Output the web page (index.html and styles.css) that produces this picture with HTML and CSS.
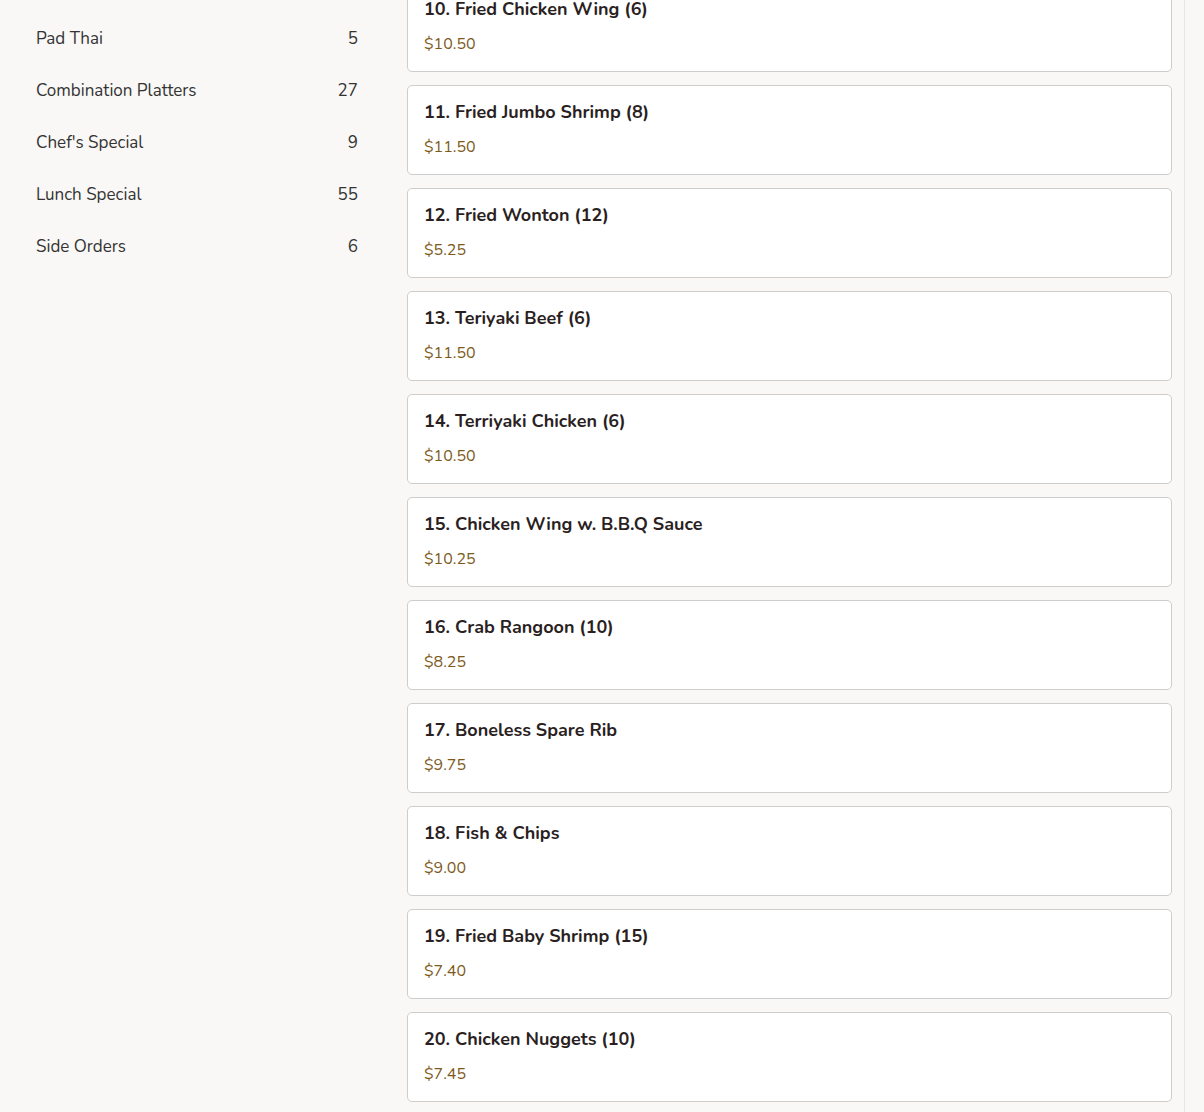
FILE: index.html
```html
<!DOCTYPE html>
<html lang="en">
<head>
    <meta charset="UTF-8">
    <meta name="viewport" content="width=device-width, initial-scale=1.0">
    <title>Menu</title>
    <link rel="stylesheet" href="styles.css">
</head>
<body>
    <div class="page">
        <!-- Categories -->
        <div class="sidebar">
            <div class="category"><span>Pad Thai</span><span class="count">5</span></div>
            <div class="category"><span>Combination Platters</span><span class="count">27</span></div>
            <div class="category"><span>Chef's Special</span><span class="count">9</span></div>
            <div class="category"><span>Lunch Special</span><span class="count">55</span></div>
            <div class="category"><span>Side Orders</span><span class="count">6</span></div>
        </div>

        <!-- Items -->
        <div class="menu">
            <div class="item-list">
                <div class="item"><div class="item-name">10. Fried Chicken Wing (6)</div><div class="item-price">$10.50</div></div>
                <div class="item"><div class="item-name">11. Fried Jumbo Shrimp (8)</div><div class="item-price">$11.50</div></div>
                <div class="item"><div class="item-name">12. Fried Wonton (12)</div><div class="item-price">$5.25</div></div>
                <div class="item"><div class="item-name">13. Teriyaki Beef (6)</div><div class="item-price">$11.50</div></div>
                <div class="item"><div class="item-name">14. Terriyaki Chicken (6)</div><div class="item-price">$10.50</div></div>
                <div class="item"><div class="item-name">15. Chicken Wing w. B.B.Q Sauce</div><div class="item-price">$10.25</div></div>
                <div class="item"><div class="item-name">16. Crab Rangoon (10)</div><div class="item-price">$8.25</div></div>
                <div class="item"><div class="item-name">17. Boneless Spare Rib</div><div class="item-price">$9.75</div></div>
                <div class="item"><div class="item-name">18. Fish &amp; Chips</div><div class="item-price">$9.00</div></div>
                <div class="item"><div class="item-name">19. Fried Baby Shrimp (15)</div><div class="item-price">$7.40</div></div>
                <div class="item"><div class="item-name">20. Chicken Nuggets (10)</div><div class="item-price">$7.45</div></div>
            </div>
        </div>

        <div class="side-rail"></div>
    </div>
</body>
</html>
```

FILE: styles.css
```css
body {
    margin: 0;
    font-family: "Nunito", Lato, "Open Sans", sans-serif;
    background-color: #f9f8f6;
    color: #2b2222;
    height: 1112px;
    overflow: hidden;
}

.page {
    display: flex;
    height: 100%;
}

.sidebar {
    width: 383px;
    flex-shrink: 0;
    padding: 13px 25px 0 36px;
    box-sizing: border-box;
}

.category {
    display: flex;
    justify-content: space-between;
    padding: 14px 0;
    font-size: 17px;
    line-height: 24px;
    color: #333;
}

.menu {
    flex: 1;
    padding: 0 12px 0 24px;
    overflow: hidden;
}

.item-list {
    display: flex;
    flex-direction: column;
    gap: 13px;
    margin-top: -18px;
}

.item {
    height: 90px;
    box-sizing: border-box;
    background-color: #fff;
    border: 1px solid #cfcccc;
    border-radius: 5px;
    padding: 14px 16px 0 16px;
}

.item-name {
    font-size: 18px;
    font-weight: bold;
    line-height: 24px;
    color: #2b1f1f;
}

.item-price {
    margin-top: 12px;
    font-size: 16px;
    line-height: 22px;
    color: #7d5a1c;
}

.side-rail {
    width: 19px;
    flex-shrink: 0;
    border-left: 1px solid #e8e6e3;
}
```
